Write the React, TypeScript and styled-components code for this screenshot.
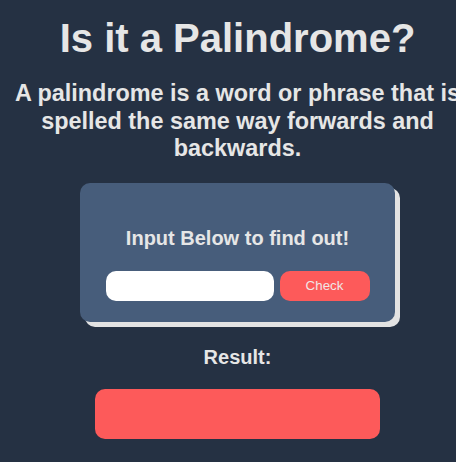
import React, { useState } from "react";
import styled, { createGlobalStyle } from "styled-components";

const GlobalStyle = createGlobalStyle`
  html, body {
    margin: 0;
    padding: 0;
    overflow: hidden;
    background: #253143;
  }
  body {
    font-family: "Liberation Sans", Arial, sans-serif;
    color: #e6e6e6;
  }
`;

const Page = styled.main`
  width: 475px;
  display: flex;
  flex-direction: column;
  align-items: center;
  text-align: center;
  padding-top: 15px;
`;

const Title = styled.h1`
  margin: 0;
  font-size: 40px;
  font-weight: 700;
  line-height: 46px;
  color: #e6e6e6;
`;

const Description = styled.h2`
  margin: 19px 0 0;
  font-size: 23.4px;
  font-weight: 700;
  line-height: 27.6px;
  color: #e6e6e6;
`;

const Card = styled.section`
  margin-top: 20px;
  width: 315px;
  box-sizing: border-box;
  padding: 44px 0 21px;
  background: #475d7b;
  border-radius: 10px;
  box-shadow: 5px 5px 0 #e3e3e3;
  display: flex;
  flex-direction: column;
  align-items: center;
`;

const CardHeading = styled.h3`
  margin: 0;
  font-size: 20px;
  font-weight: 700;
  line-height: 23px;
  color: #e6e6e6;
`;

const InputRow = styled.div`
  margin-top: 21px;
  display: flex;
  gap: 6px;
`;

const TextInput = styled.input`
  width: 168px;
  height: 30px;
  box-sizing: border-box;
  border: none;
  border-radius: 10px;
  background: #ffffff;
  padding: 0 10px;
  font-family: "Liberation Sans", Arial, sans-serif;
  font-size: 13.33px;
  outline: none;
`;

const CheckButton = styled.button`
  width: 90px;
  height: 30px;
  border: none;
  border-radius: 10px;
  background: #fd5a5a;
  color: #f0e6e6;
  font-family: "Liberation Sans", Arial, sans-serif;
  font-size: 13.33px;
  cursor: pointer;
`;

const ResultLabel = styled.h3`
  margin: 24px 0 0;
  font-size: 20px;
  font-weight: 700;
  line-height: 23px;
  color: #e6e6e6;
`;

const ResultBox = styled.div`
  margin-top: 20px;
  width: 285px;
  height: 50px;
  border-radius: 10px;
  background: #fd5a5a;
`;

export default function App() {
  const [value, setValue] = useState("");
  return (
    <>
      <GlobalStyle />
      <Page>
        <Title>Is it a Palindrome?</Title>
        <Description>
          A palindrome is a word or phrase that is spelled the same way forwards and backwards.
        </Description>
        <Card>
          <CardHeading>Input Below to find out!</CardHeading>
          <InputRow>
            <TextInput value={value} onChange={(e) => setValue(e.target.value)} />
            <CheckButton>Check</CheckButton>
          </InputRow>
        </Card>
        <ResultLabel>Result:</ResultLabel>
        <ResultBox />
      </Page>
    </>
  );
}
